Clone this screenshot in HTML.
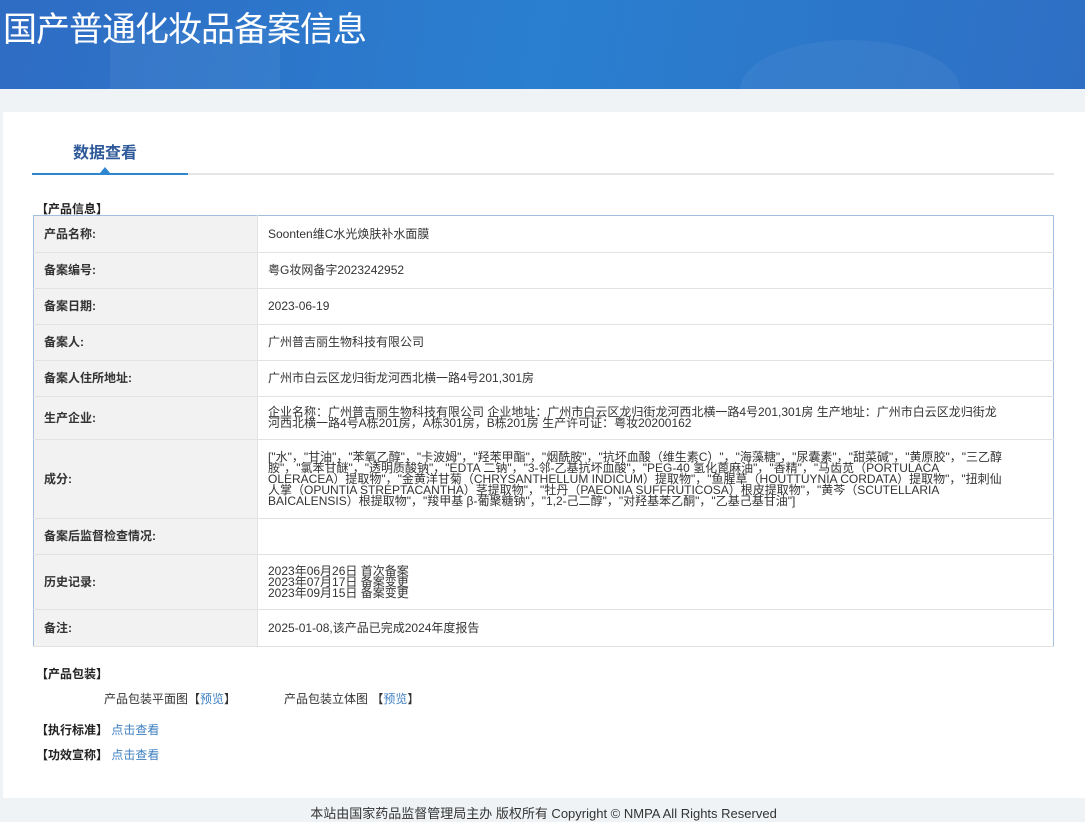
<!DOCTYPE html>
<html><head><meta charset="utf-8"><style>
*{margin:0;padding:0;box-sizing:border-box}
body{width:1085px;height:822px;overflow:hidden;background:#eff3f6;font-family:"Liberation Sans","Noto Sans CJK SC",sans-serif;position:relative;color:#333}
.hd{position:absolute;left:0;top:0;width:1085px;height:89px;background:linear-gradient(100deg,#2f6cc4 0%,#2a7fd0 50%,#2e6fc4 100%);overflow:hidden}
.hd h1{position:absolute;left:3px;top:2px;color:#fff;font-weight:normal;font-size:34px;letter-spacing:-1px}
.panel{position:absolute;left:3px;top:112px;width:1082px;height:686px;background:#fff}
.tab{position:absolute;left:73px;top:139px;font-size:16px;font-weight:bold;color:#2f5a9a}
.line{position:absolute;left:32px;top:173px;width:1022px;height:2px;background:#e5e5e5}
.line b{position:absolute;left:0;top:0;width:156px;height:2px;background:#2e86d0}
.tri{position:absolute;left:100px;top:167px;width:0;height:0;border-left:5px solid transparent;border-right:5px solid transparent;border-bottom:6px solid #2e86d0}
.sec{position:absolute;left:36px;font-size:12px;font-weight:bold;color:#222}
table{position:absolute;left:33px;top:215px;width:1021px;border-collapse:collapse;border:1px solid #a3bfe0;font-size:12px}
td{border-bottom:1px solid #e2e2e2;vertical-align:middle;line-height:11px}
td.l{width:224px;background:#f2f2f2;font-weight:bold;font-size:12px;padding-left:10px;color:#333;border-right:1px solid #e2e2e2}
td.v{padding-left:10px;padding-right:45px;color:#333}
.lk{color:#3d7fc0}
.ft{position:absolute;left:0;top:803px;width:1085px;text-align:center;font-size:13px;color:#333;padding-left:2px}
</style></head><body>
<div class="hd"><h1>国产普通化妆品备案信息</h1>
<div style="position:absolute;left:110px;top:30px;width:170px;height:70px;background:rgba(255,255,255,.05)"></div>
<div style="position:absolute;left:740px;top:40px;width:220px;height:100px;border-radius:50%;background:rgba(255,255,255,.05)"></div></div>
<div class="panel"></div>
<div class="tab">数据查看</div>
<div class="line"><b></b></div><div class="tri"></div>
<div class="sec" style="top:200px">【产品信息】</div>
<table>
<tr style="height:37px"><td class="l">产品名称:</td><td class="v">Soonten维C水光焕肤补水面膜</td></tr>
<tr style="height:36px"><td class="l">备案编号:</td><td class="v">粤G妆网备字2023242952</td></tr>
<tr style="height:36px"><td class="l">备案日期:</td><td class="v">2023-06-19</td></tr>
<tr style="height:36px"><td class="l">备案人:</td><td class="v">广州普吉丽生物科技有限公司</td></tr>
<tr style="height:36px"><td class="l">备案人住所地址:</td><td class="v">广州市白云区龙归街龙河西北横一路4号201,301房</td></tr>
<tr style="height:43px"><td class="l">生产企业:</td><td class="v">企业名称：广州普吉丽生物科技有限公司 企业地址：广州市白云区龙归街龙河西北横一路4号201,301房 生产地址：广州市白云区龙归街龙河西北横一路4号A栋201房，A栋301房，B栋201房 生产许可证：粤妆20200162</td></tr>
<tr style="height:79px"><td class="l">成分:</td><td class="v">["水"，"甘油"，"苯氧乙醇"，"卡波姆"，"羟苯甲酯"，"烟酰胺"，"抗坏血酸（维生素C）"，"海藻糖"，"尿囊素"，"甜菜碱"，"黄原胶"，"三乙醇胺"，"氯苯甘醚"，"透明质酸钠"，"EDTA 二钠"，"3-邻-乙基抗坏血酸"，"PEG-40 氢化蓖麻油"，"香精"，"马齿苋（PORTULACA OLERACEA）提取物"，"金黄洋甘菊（CHRYSANTHELLUM INDICUM）提取物"，"鱼腥草（HOUTTUYNIA CORDATA）提取物"，"扭刺仙人掌（OPUNTIA STREPTACANTHA）茎提取物"，"牡丹（PAEONIA SUFFRUTICOSA）根皮提取物"，"黄芩（SCUTELLARIA BAICALENSIS）根提取物"，"羧甲基 β-葡聚糖钠"，"1,2-己二醇"，"对羟基苯乙酮"，"乙基己基甘油"]</td></tr>
<tr style="height:36px"><td class="l">备案后监督检查情况:</td><td class="v"></td></tr>
<tr style="height:55px"><td class="l">历史记录:</td><td class="v">2023年06月26日 首次备案<br>2023年07月17日 备案变更<br>2023年09月15日 备案变更</td></tr>
<tr style="height:37px"><td class="l">备注:</td><td class="v">2025-01-08,该产品已完成2024年度报告</td></tr>
</table>
<div class="sec" style="top:665px">【产品包装】</div>
<div style="position:absolute;left:104px;top:690px;font-size:12px">产品包装平面图【<span class="lk">预览</span>】</div>
<div style="position:absolute;left:284px;top:690px;font-size:12px">产品包装立体图 【<span class="lk">预览</span>】</div>
<div class="sec" style="top:721px">【执行标准】 <span class="lk" style="font-weight:normal">点击查看</span></div>
<div class="sec" style="top:746px">【功效宣称】 <span class="lk" style="font-weight:normal">点击查看</span></div>
<div class="ft">本站由国家药品监督管理局主办 版权所有 Copyright © NMPA All Rights Reserved</div>
</body></html>
